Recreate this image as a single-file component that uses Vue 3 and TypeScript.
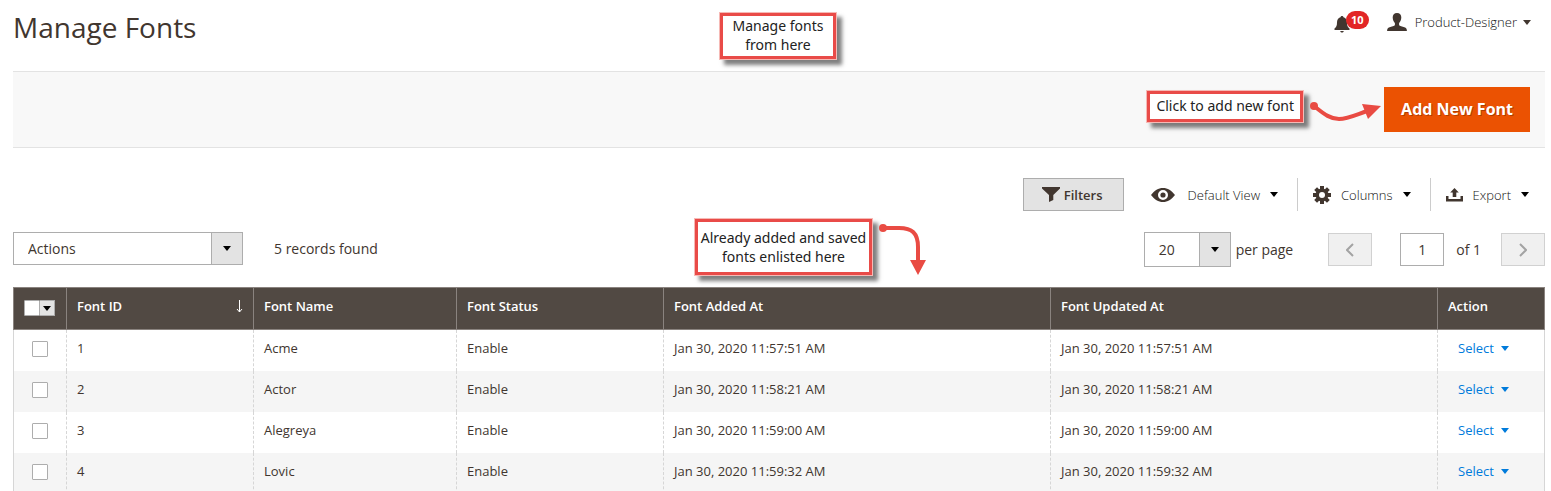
<script setup lang="ts">
import { ref } from 'vue'

interface FontRow {
  id: number
  name: string
  status: string
  added: string
  updated: string
}

const rows = ref<FontRow[]>([
  { id: 1, name: 'Acme', status: 'Enable', added: 'Jan 30, 2020 11:57:51 AM', updated: 'Jan 30, 2020 11:57:51 AM' },
  { id: 2, name: 'Actor', status: 'Enable', added: 'Jan 30, 2020 11:58:21 AM', updated: 'Jan 30, 2020 11:58:21 AM' },
  { id: 3, name: 'Alegreya', status: 'Enable', added: 'Jan 30, 2020 11:59:00 AM', updated: 'Jan 30, 2020 11:59:00 AM' },
  { id: 4, name: 'Lovic', status: 'Enable', added: 'Jan 30, 2020 11:59:32 AM', updated: 'Jan 30, 2020 11:59:32 AM' },
])
const selected = ref<number[]>([])
const page = ref('1')
</script>

<template>
  <div class="page">
    <header class="header">
      <h1>Manage Fonts</h1>
      <div class="account">
        <button class="bell" type="button" aria-label="Notifications">
          <svg width="16" height="18" viewBox="0 0 16 18">
            <path fill="#41362f" d="M8 1c.9 0 1.400.6 1.500 1.300C12 3 13 5 13 7.500c0 3.500.8 4.800 2.500 6V15H.5v-1.500C2.200 12.300 3 11 3 7.500 3 5 4 3 6.500 2.300 6.600 1.600 7.100 1 8 1zM6.200 16h3.600c-.3 1-1 1.600-1.800 1.600S6.500 17 6.200 16z" />
          </svg>
          <span class="badge">10</span>
        </button>
        <button class="user" type="button">
          <svg width="20" height="18" viewBox="0 0 20 18">
            <path fill="#41362f" d="M10 0c2.800 0 4.400 1.800 4.300 4.500-.1 2.400-1 4.300-2.200 5.500v2.200c1.400 1.100 4.300 1.500 6 2.300 1.200.6 1.800 1.500 1.800 3.500H.1c0-2 .6-2.900 1.800-3.500 1.700-.8 4.600-1.200 6-2.300V10C6.700 8.800 5.800 6.900 5.700 4.500 5.600 1.800 7.200 0 10 0z" />
          </svg>
          <span class="user-name">Product-Designer</span>
          <svg class="caret" width="8" height="5" viewBox="0 0 8 5"><path fill="#41362f" d="M0 0h8L4 5z" /></svg>
        </button>
      </div>
      <div class="callout callout-title">Manage fonts<br>from here</div>
    </header>

    <div class="actions-bar">
      <div class="callout">Click to add new font</div>
      <svg class="pointer" width="80" height="33" viewBox="0 0 80 33">
        <circle cx="10" cy="16" r="4" fill="#e94b43" />
        <path d="M10 16C21 25 27 29 35 29c8 0 14-3 28-8" fill="none" stroke="#e94b43" stroke-width="4" />
        <path d="M58 14l19 2-13 13z" fill="#e94b43" />
      </svg>
      <button class="primary" type="button">Add New Font</button>
    </div>

    <div class="tools">
      <button class="filters" type="button">
        <svg width="18" height="15" viewBox="0 0 18 15"><path fill="#41362f" d="M0 0h18v1.500L11.300 8v5L7 15V8L0 1.500z" /></svg>
        <span>Filters</span>
      </button>
      <button class="tool" type="button">
        <svg width="24" height="14" viewBox="0 0 24 14">
          <path fill="#41362f" fill-rule="evenodd" d="M0 7c3.500-4.500 7.300-7 12-7s8.500 2.500 12 7c-3.500 4.500-7.300 7-12 7S3.500 11.500 0 7zm12-5a5 5 0 1 0 0 10 5 5 0 0 0 0-10z" />
          <circle cx="12" cy="7" r="2.600" fill="#41362f" />
        </svg>
        <span class="view-name">Default View</span>
        <svg class="caret" width="8" height="5" viewBox="0 0 8 5"><path d="M0 0h8L4 5z" /></svg>
      </button>
      <button class="tool divided" type="button">
        <svg width="18" height="18" viewBox="-9 -9 18 18">
          <g fill="#41362f">
            <rect x="-2" y="-9" width="4" height="18" />
            <rect x="-2" y="-9" width="4" height="18" transform="rotate(45)" />
            <rect x="-2" y="-9" width="4" height="18" transform="rotate(90)" />
            <rect x="-2" y="-9" width="4" height="18" transform="rotate(135)" />
            <circle r="6.500" />
          </g>
          <circle r="3" fill="#fff" />
        </svg>
        <span>Columns</span>
        <svg class="caret" width="8" height="5" viewBox="0 0 8 5"><path d="M0 0h8L4 5z" /></svg>
      </button>
      <button class="tool divided" type="button">
        <svg width="17" height="14" viewBox="0 0 17 14">
          <path fill="#41362f" d="M8.500 0l4.300 4.500h-2.500V9H6.700V4.500H4.200zM0 8h2.500v3h12V8H17v5.500H0z" />
        </svg>
        <span>Export</span>
        <svg class="caret" width="8" height="5" viewBox="0 0 8 5"><path d="M0 0h8L4 5z" /></svg>
      </button>
    </div>

    <div class="grid-bar">
      <div class="select mass">
        <select aria-label="Actions"><option>Actions</option></select>
        <span class="select-arrow"><svg width="8" height="5" viewBox="0 0 8 5"><path d="M0 0h8L4 5z" /></svg></span>
      </div>
      <span class="found">5 records found</span>
      <div class="pager">
        <div class="select size">
          <select id="page-size"><option>20</option></select>
          <span class="select-arrow"><svg width="8" height="5" viewBox="0 0 8 5"><path d="M0 0h8L4 5z" /></svg></span>
        </div>
        <label class="per-page" for="page-size">per page</label>
        <button class="step" type="button" aria-label="Previous page" disabled>
          <svg width="8" height="14" viewBox="0 0 8 14"><path d="M7 1L1 7l6 6" fill="none" stroke="#a3a3a3" stroke-width="2" /></svg>
        </button>
        <input id="page-number" v-model="page" class="number" type="text">
        <label class="of" for="page-number">of 1</label>
        <button class="step" type="button" aria-label="Next page" disabled>
          <svg width="8" height="14" viewBox="0 0 8 14"><path d="M1 1l6 6-6 6" fill="none" stroke="#a3a3a3" stroke-width="2" /></svg>
        </button>
      </div>
      <div class="callout callout-list">Already added and saved<br>fonts enlisted here</div>
      <svg class="pointer-list" width="50" height="54" viewBox="0 0 50 54">
        <circle cx="6" cy="6" r="4" fill="#e94b43" />
        <path d="M6 6h16C35 6 41 11 41 25v14" fill="none" stroke="#e94b43" stroke-width="4" />
        <path d="M33 38h16l-8 15z" fill="#e94b43" />
      </svg>
    </div>

    <table>
      <colgroup>
        <col class="c-check"><col class="c-id"><col class="c-name"><col class="c-status"><col><col><col class="c-action">
      </colgroup>
      <thead>
        <tr>
          <th class="check">
            <span class="multi">
              <input type="checkbox" aria-label="Select all">
              <button type="button" aria-label="Selection options"><svg width="8" height="5" viewBox="0 0 8 5"><path d="M0 0h8L4 5z" /></svg></button>
            </span>
          </th>
          <th>
            <span class="sorted">Font ID
              <svg width="7" height="13" viewBox="0 0 7 13"><path d="M3.500 0v12M1 9l2.500 3L6 9" fill="none" stroke="#fff" /></svg>
            </span>
          </th>
          <th>Font Name</th>
          <th>Font Status</th>
          <th>Font Added At</th>
          <th>Font Updated At</th>
          <th>Action</th>
        </tr>
      </thead>
      <tbody>
        <tr v-for="row in rows" :key="row.id">
          <td class="check"><input v-model="selected" type="checkbox" :value="row.id" :aria-label="'Select ' + row.name"></td>
          <td>{{ row.id }}</td>
          <td>{{ row.name }}</td>
          <td>{{ row.status }}</td>
          <td>{{ row.added }}</td>
          <td>{{ row.updated }}</td>
          <td>
            <button class="row-action" type="button">
              Select
              <svg width="8" height="5" viewBox="0 0 8 5"><path fill="#007bdb" d="M0 0h8L4 5z" /></svg>
            </button>
          </td>
        </tr>
      </tbody>
    </table>
  </div>
</template>

<style>
html,
body {
  overflow: hidden;
  background: #fff;
}
</style>

<style scoped>
* {
  box-sizing: border-box;
}
.page {
  padding: 0 6px 0 13px;
  color: #41362f;
  font: 13px/18px "Open Sans", "Noto Sans", sans-serif;
}
svg {
  display: block;
  flex: none;
}
button,
input,
select {
  margin: 0;
  padding: 0;
  color: inherit;
  font: inherit;
  border-radius: 0;
}
button {
  border: 0;
  background: none;
}
.header {
  position: relative;
  display: flex;
  justify-content: space-between;
  height: 71px;
}
h1 {
  margin: 8px 0 0;
  font-size: 28px;
  line-height: 38px;
  font-weight: 400;
}
.account {
  display: flex;
  align-items: flex-start;
  gap: 18px;
  padding: 10px 14px 0 0;
}
.bell {
  display: flex;
  align-items: flex-start;
}
.bell svg {
  margin-top: 5px;
}
.badge {
  margin: 1px 0 0 -4px;
  padding: 0 5px;
  border-radius: 9px;
  background: #e22626;
  color: #fff;
  font-size: 11px;
  line-height: 18px;
  font-weight: 700;
}
.user {
  display: flex;
  align-items: center;
  height: 24px;
  color: #111;
  font-weight: 300;
}
.user-name {
  margin: 0 6px 0 8px;
}
.callout {
  padding: 2px 6px 4px;
  border: 4px solid #e94b48;
  outline: 1px solid #f6b9b5;
  outline-offset: -1px;
  background: #fff;
  box-shadow: 5px 5px 4px rgba(0, 0, 0, 0.5);
  color: #222;
  font: 14px/19px "Noto Sans", "Open Sans", sans-serif;
  text-align: center;
  white-space: nowrap;
}
.callout-title {
  position: absolute;
  top: 12px;
  left: 706px;
  width: 118px;
  padding: 0 0 2px;
}
.actions-bar {
  display: flex;
  align-items: flex-start;
  justify-content: flex-end;
  padding: 15px 15px 15px 0;
  border: solid #e3e3e3;
  border-width: 1px 0;
  background: #f8f8f8;
}
.actions-bar .callout,
.pointer {
  margin-top: 3px;
}
.primary {
  padding: 0 17px;
  background: #eb5202;
  color: #fff;
  font-size: 16px;
  line-height: 45px;
  font-weight: 700;
  text-shadow: 1px 1px 0 rgba(0, 0, 0, 0.25);
}
.tools {
  display: flex;
  justify-content: flex-end;
  margin-top: 30px;
}
.filters {
  display: flex;
  align-items: center;
  justify-content: center;
  gap: 4px;
  width: 101px;
  height: 33px;
  margin-right: 11px;
  padding-right: 2px;
  border: 1px solid #adadad;
  background: #e3e3e3;
  font-weight: 600;
}
.tool {
  display: flex;
  align-items: center;
  gap: 10px;
  height: 33px;
  padding: 0 19px 0 16px;
  color: #111;
  font-weight: 300;
}
.tool:last-child {
  padding-right: 16px;
}
.divided {
  border-left: 1px solid #ccc;
  padding-left: 15px;
}
.view-name {
  margin-left: 3px;
}
.grid-bar {
  position: relative;
  display: flex;
  align-items: flex-start;
  margin-top: 21px;
  height: 55px;
  font-size: 14px;
}
.select {
  display: flex;
  position: relative;
  border: 1px solid #adadad;
}
.select select {
  width: 100%;
  padding: 0 32px 0 14px;
  border: 0;
  background: #fff;
  appearance: none;
}
.select-arrow {
  position: absolute;
  top: 0;
  right: 0;
  bottom: 0;
  display: grid;
  place-items: center;
  width: 31px;
  border-left: 1px solid #adadad;
  background: #e3e3e3;
  pointer-events: none;
}
.mass {
  width: 230px;
  height: 33px;
}
.found {
  margin-left: 31px;
  line-height: 34px;
}
.pager {
  display: flex;
  align-items: center;
  margin-left: auto;
}
.size {
  width: 87px;
  height: 35px;
}
.per-page {
  margin: 0 35px 0 5px;
}
.step {
  display: grid;
  place-items: center;
  width: 44px;
  height: 33px;
  border: 1px solid #d1d1d1;
  background: #f0f0f0;
}
.number {
  width: 44px;
  height: 33px;
  margin: 0 12px 0 28px;
  border: 1px solid #adadad;
  text-align: center;
}
.of {
  margin-right: 20px;
}
.callout-list {
  position: absolute;
  top: -14px;
  left: 681px;
  width: 179px;
  padding: 6px 0;
}
.pointer-list {
  position: absolute;
  top: -10px;
  left: 864px;
}
table {
  width: 100%;
  table-layout: fixed;
  border-spacing: 0;
}
.c-check {
  width: 53px;
}
.c-id {
  width: 187px;
}
.c-name {
  width: 203px;
}
.c-status {
  width: 207px;
}
.c-action {
  width: 108px;
}
th {
  height: 43px;
  padding: 9px 10px;
  border: solid #8a837f;
  border-width: 1px 0 1px 1px;
  background: #514943;
  color: #fff;
  font-weight: 600;
  text-align: left;
  vertical-align: top;
}
th:last-child {
  border-right-width: 1px;
}
td {
  height: 41px;
  padding: 9px 10px;
  border-left: 1px dashed #d6d6d6;
  vertical-align: top;
}
td:first-child {
  border-left: 1px solid #d6d6d6;
}
td:last-child {
  border-right: 1px solid #d6d6d6;
}
tbody tr:nth-child(even) {
  background: #f5f5f5;
}
input[type="checkbox"] {
  display: block;
  width: 16px;
  height: 16px;
  border: 1px solid #adadad;
  border-radius: 1px;
  background: #fff;
  appearance: none;
}
td.check {
  padding: 11px 18px;
}
th.check {
  padding: 12px 10px;
}
.multi {
  display: flex;
  width: 31px;
  height: 16px;
}
.multi button {
  display: grid;
  place-items: center;
  width: 15px;
  border: solid #adadad;
  border-width: 1px 1px 1px 0;
  background: #e3e3e3;
}
.sorted {
  display: flex;
  align-items: center;
  justify-content: space-between;
}
.row-action {
  display: flex;
  align-items: center;
  gap: 7px;
  margin-left: 10px;
  color: #007bdb;
}
</style>
